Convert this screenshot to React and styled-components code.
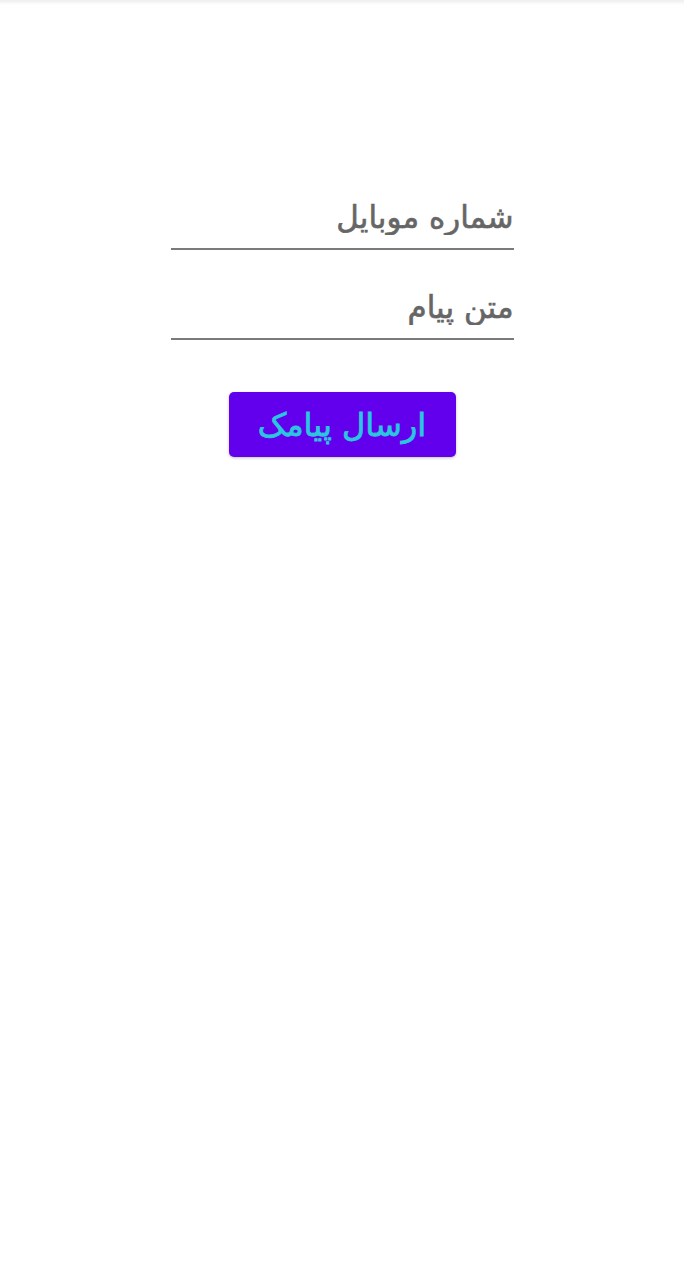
import React from "react";
import styled, { createGlobalStyle } from "styled-components";

const Global = createGlobalStyle`
  html, body { margin: 0; padding: 0; background: #ffffff; }
  body { font-family: "DejaVu Sans", "Noto Sans", sans-serif; }
`;

const Screen = styled.div`
  position: relative;
  width: 684px;
  min-height: 1280px;
  background: #ffffff;
  display: flex;
  flex-direction: column;
  align-items: center;
  padding-top: 188px;
  box-sizing: border-box;
`;

const TopShadow = styled.div`
  position: absolute;
  top: 0;
  left: 0;
  right: 0;
  height: 5px;
  background: linear-gradient(#eeeeee, rgba(255, 255, 255, 0));
`;

const Form = styled.div`
  width: 343px;
  display: flex;
  flex-direction: column;
  gap: 28px;
`;

const Field = styled.input`
  direction: rtl;
  width: 100%;
  box-sizing: border-box;
  height: 62px;
  padding: 2px 0 4px 0;
  border: none;
  border-bottom: 2px solid #7a7a7a;
  outline: none;
  background: transparent;
  font-family: "DejaVu Sans", sans-serif;
  font-size: 31px;
  font-weight: normal;
  color: #333;
  -webkit-text-stroke: 0.6px #666666;
  &::placeholder { color: #666666; opacity: 1; }
`;

const Button = styled.button`
  margin-top: 52px;
  width: 227px;
  height: 65px;
  border: none;
  border-radius: 5px;
  background: #6200ee;
  color: #2bc6df;
  font-family: "DejaVu Sans", sans-serif;
  font-size: 32px;
  font-weight: normal;
  -webkit-text-stroke: 0.8px #2bc6df;
  direction: rtl;
  box-shadow: 0 1px 3px rgba(0, 0, 0, 0.25);
`;

export default function App() {
  return (
    <>
      <Global />
      <Screen>
        <TopShadow />
        <Form>
          <Field placeholder="شماره موبایل" />
          <Field placeholder="متن پیام" />
        </Form>
        <Button>ارسال پیامک</Button>
      </Screen>
    </>
  );
}
